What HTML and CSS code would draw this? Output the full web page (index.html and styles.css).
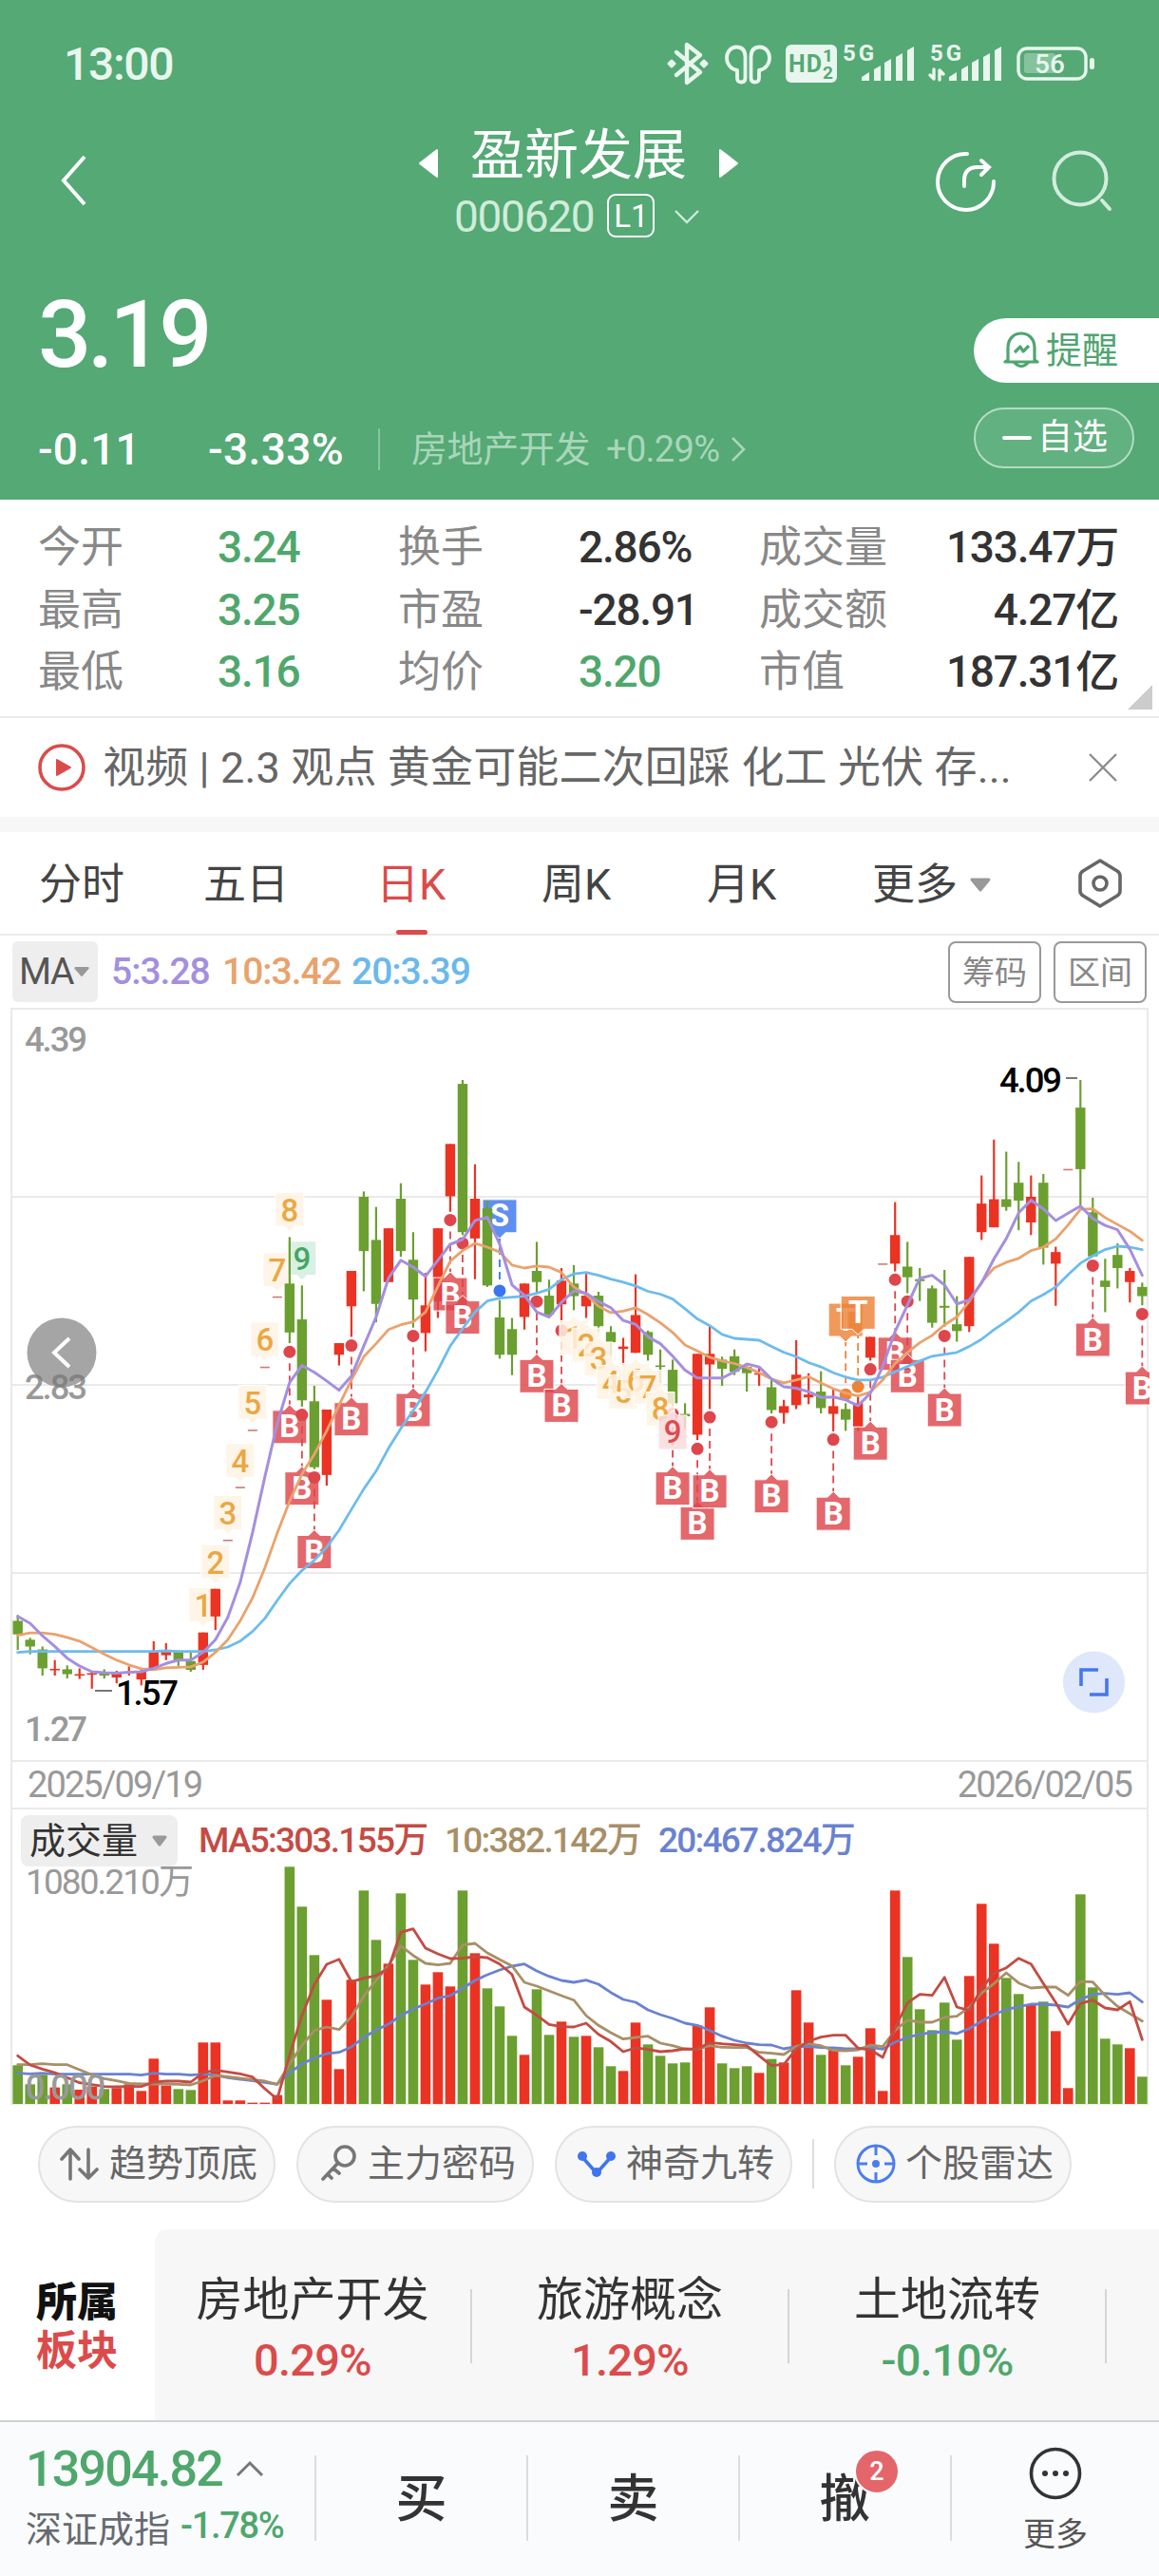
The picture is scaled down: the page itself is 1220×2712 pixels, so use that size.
FILE: index.html
```
<!DOCTYPE html>
<html lang="zh-CN">
<head>
<meta charset="utf-8">
<title>盈新发展 000620</title>
<link rel="stylesheet" href="styles.css">
</head>
<body>
<header class="head">
  <div class="status">
    <span class="clock">13:00</span>
    <svg class="status-icons" width="470" height="80" viewBox="0 0 470 80" fill="none" stroke="#e9f6ee" stroke-linejoin="round" stroke-linecap="round">
      <path d="M22 25L47 46L33 57V17L47 28L22 49" stroke-width="4.400"/>
      <path d="M14 37l3-3 3 3-3 3zM48 37l3-3 3 3-3 3z" fill="#e9f6ee" stroke-width="3"/>
      <path id="bud" d="M86 44C79 43 75 37 75 31C75 24 80 19.500 85 19.500C91 19.500 94.500 23 94.500 30V52Q94.500 56.500 90.500 56.500Q86 56.500 86 52z" stroke-width="3.800"/>
      <path d="M109 44C116 43 120 37 120 31C120 24 115 19.500 110 19.500C104 19.500 100.500 23 100.500 30V52Q100.500 56.500 104.500 56.500Q109 56.500 109 52z" stroke-width="3.800"/>
      <rect x="137" y="17" width="54" height="40" rx="6" fill="#e9f6ee" stroke="none"/>
      <g fill="#54a975" stroke="none" font-weight="700"><text x="140" y="46" font-size="25" textLength="35">HD</text><text x="176" y="35" font-size="19">1</text><text x="176" y="53" font-size="19">2</text></g>
      <g fill="#e9f6ee" stroke="none" font-weight="700" font-size="24"><text x="197" y="34" textLength="33">5G</text><text x="289" y="34" textLength="33">5G</text></g>
      <g fill="#e9f6ee" stroke="none">
        <path d="M217 55v-4l8-5v9zM230 55V43l7-4v16zM241 55V36l7-4v23zM253 55V30l7-4v29zM265 55V23l7-4v36z"/>
        <path d="M309 55v-4l8-5v9zM322 55V43l7-4v16zM333 55V36l7-4v23zM345 55V30l7-4v29zM357 55V23l7-4v36z"/>
      </g>
      <path d="M293 43V53L289 49M299 54V44L303 48" stroke-width="3.400"/>
      <rect x="388" y="26" width="33" height="21" rx="3" fill="#86c39d" stroke="none"/>
      <rect x="382" y="21" width="71" height="32" rx="9" stroke-width="3.400"/>
      <rect x="457" y="31" width="5" height="12" rx="2.500" fill="#e9f6ee" stroke="none"/>
      <text x="399" y="47" fill="#e9f6ee" stroke="none" font-size="28" font-weight="500">56</text>
    </svg>
  </div>
  <div class="title-row">
    <svg class="back" width="30" height="56" viewBox="0 0 30 56"><path d="M27 3L5 28L27 53" fill="none" stroke="#fff" stroke-width="4"/></svg>
    <div class="title">
      <div class="name">
        <svg width="22" height="32" viewBox="0 0 22 32"><path d="M20 2V30L2 16z" fill="#fff" stroke="#fff" stroke-width="2" stroke-linejoin="round"/></svg>
        <span>盈新发展</span>
        <svg width="22" height="32" viewBox="0 0 22 32"><path d="M2 2V30L20 16z" fill="#fff" stroke="#fff" stroke-width="2" stroke-linejoin="round"/></svg>
      </div>
      <div class="code"><span>000620</span><b>L1</b>
        <svg width="26" height="16" viewBox="0 0 26 16"><path d="M1 2L13 14L25 2" fill="none" stroke="#cfeada" stroke-width="2.400"/></svg>
      </div>
    </div>
    <svg class="tools" width="190" height="70" viewBox="0 0 190 70" fill="none" stroke-linecap="round" stroke="#fff" stroke-width="4">
      <path d="M34 5A29.500 29.500 0 1 0 62 34M31 39V33Q31 19 45 19H57M49 12L57 19L49 27"/>
      <g stroke="#d3eddd"><circle cx="153" cy="31" r="27.500"/><path d="M176 54L184 63"/></g>
    </svg>
  </div>
  <div class="quote">
    <div class="price">3.19</div>
    <div class="change"><span class="diff">-0.11</span><span class="pct">-3.33%</span><i></i><span class="sector">房地产开发</span><span class="sector-pct">+0.29%</span>
      <svg width="17" height="28" viewBox="0 0 17 28"><path d="M2 2L14 14L2 26" fill="none" stroke="#a9d6b9" stroke-width="2.600"/></svg>
    </div>
  </div>
  <div class="actions">
    <div class="alert">
      <svg width="38" height="40" viewBox="0 0 38 40" fill="none" stroke="#4fa56f" stroke-width="3.200" stroke-linejoin="round"><path d="M5 30V17C5 -3 33 -3 33 17V30L36 32H2zM11 32q8 9 16 0"/><path d="M12 22l6-6 3 5 6-6"/></svg>
      <span>提醒</span>
    </div>
    <div class="watch"><i></i><span>自选</span></div>
  </div>
</header>

<section class="stats">
  <span>今开</span><b class="down">3.24</b><span>换手</span><b>2.86%</b><span>成交量</span><b class="end">133.47万</b>
  <span>最高</span><b class="down">3.25</b><span>市盈</span><b>-28.91</b><span>成交额</span><b class="end">4.27亿</b>
  <span>最低</span><b class="down">3.16</b><span>均价</span><b class="down">3.20</b><span>市值</span><b class="end">187.31亿</b>
  <i class="corner"></i>
</section>

<section class="news">
  <svg width="52" height="52" viewBox="0 0 52 52"><circle cx="26" cy="26" r="23" fill="none" stroke="#db4b4b" stroke-width="3.600"/><path d="M21 18V34L35 26z" fill="#db4b4b" stroke="#db4b4b" stroke-width="2" stroke-linejoin="round"/></svg>
  <p>视频 | 2.3 观点 黄金可能二次回踩 化工 光伏 存...</p>
  <svg width="30" height="30" viewBox="0 0 30 30"><path d="M1 1L29 29M29 1L1 29" stroke="#8c8c8c" stroke-width="2.400"/></svg>
</section>

<nav class="tabs">
  <span>分时</span><span>五日</span><span class="on">日K</span><span>周K</span><span>月K</span>
  <span class="more">更多<svg width="24" height="16" viewBox="0 0 24 16"><path d="M3 2H21L12 13z" fill="#999" stroke="#999" stroke-width="3" stroke-linejoin="round"/></svg></span>
  <svg class="gear" width="50" height="54" viewBox="0 0 50 54" fill="none" stroke="#666" stroke-width="3.600"><path d="M25 3L43 14Q46 16 46 19V35Q46 38 43 40L25 51L7 40Q4 38 4 35V19Q4 16 7 14z" stroke-linejoin="round"/><circle cx="25" cy="27" r="7"/></svg>
</nav>

<section class="ma-row">
  <div class="ma-pick">MA<svg width="18" height="12" viewBox="0 0 16 11"><path d="M2 2H14L8 9z" fill="#999" stroke="#999" stroke-width="2" stroke-linejoin="round"/></svg></div>
  <b class="ma5">5:3.28</b><b class="ma10">10:3.42</b><b class="ma20">20:3.39</b>
  <div class="box first">筹码</div><div class="box">区间</div>
</section>

<section class="kline">
  <svg id="kline" width="1220" height="794" viewBox="0 0 1220 794"></svg>
</section>
<div class="dates"><span>2025/09/19</span><span>2026/02/05</span></div>
<section class="volume">
  <div class="vol-head">
    <div class="vol-pick">成交量<svg width="18" height="13" viewBox="0 0 18 13"><path d="M3 2H15L9 10z" fill="#999" stroke="#999" stroke-width="3" stroke-linejoin="round"/></svg></div>
    <b class="v5">MA5:303.155万</b><b class="v10">10:382.142万</b><b class="v20">20:467.824万</b>
  </div>
  <svg id="volume" class="vol-plot" width="1220" height="311" viewBox="0 0 1220 311"></svg>
</section>

<section class="chips">
  <div class="chip"><svg width="42" height="42" viewBox="0 0 42 42" fill="none" stroke="#777" stroke-width="3.600" stroke-linecap="round" stroke-linejoin="round"><path d="M11 37V6M2 16L11 6L20 16M30 6V36M21 27L30 36L39 27"/></svg><span>趋势顶底</span></div>
  <div class="chip"><svg width="42" height="42" viewBox="0 0 42 42" fill="none" stroke="#777" stroke-width="3.600" stroke-linecap="round"><circle cx="28" cy="13" r="10"/><path d="M21 20L5 37M16 26L22 31M10 32L14 36"/></svg><span>主力密码</span></div>
  <div class="chip"><svg width="42" height="42" viewBox="0 0 42 42" fill="#3f74f0"><path d="M6 14L21 31L36 14" fill="none" stroke="#3f74f0" stroke-width="3.600"/><circle cx="6" cy="13" r="5"/><circle cx="36" cy="13" r="5"/><circle cx="21" cy="30" r="5"/></svg><span>神奇九转</span></div>
  <i></i>
  <div class="chip"><svg width="42" height="42" viewBox="0 0 42 42" fill="none" stroke="#4a7df0" stroke-width="3"><circle cx="21" cy="21" r="19"/><path d="M21 2V12M21 30V40M2 21H12M30 21H40"/><circle cx="21" cy="21" r="2.500" fill="#4a7df0"/></svg><span>个股雷达</span></div>
</section>

<section class="sectors">
  <div class="sector-title"><span>所属</span><span class="up">板块</span></div>
  <div class="sector-list">
    <div class="item"><span>房地产开发</span><b class="up">0.29%</b></div>
    <div class="item"><span>旅游概念</span><b class="up">1.29%</b></div>
    <div class="item"><span>土地流转</span><b class="down">-0.10%</b></div>
  </div>
</section>

<footer class="bar">
  <div class="index">
    <div class="index-value">13904.82<svg width="30" height="18" viewBox="0 0 30 18"><path d="M2 16L15 3L28 16" fill="none" stroke="#777" stroke-width="3"/></svg></div>
    <div class="index-name">深证成指<b>-1.78%</b></div>
  </div>
  <div class="act">买</div>
  <div class="act">卖</div>
  <div class="act">撤<em>2</em></div>
  <div class="act-more">
    <svg width="58" height="58" viewBox="0 0 58 58"><circle cx="29" cy="29" r="25.500" fill="none" stroke="#333" stroke-width="3.600"/><g fill="#333"><circle cx="18" cy="29" r="3"/><circle cx="29" cy="29" r="3"/><circle cx="40" cy="29" r="3"/></g></svg>
    <span>更多</span>
  </div>
</footer>
<script src="chart.js"></script>
</body>
</html>
```
FILE: styles.css
```
* { box-sizing: border-box; }
body { margin: 0; width: 1220px; background: #fff; color: #333; font-family: Roboto, "Noto Sans CJK SC", sans-serif; }
svg { display: block; flex: none; }
b { font-weight: 500; }
.down { color: #4fa76c; }
.up { color: #db4b4b; }

.head { position: relative; height: 526px; background: #54a975; color: #fff; overflow: hidden; }
.status { display: flex; justify-content: space-between; align-items: center; height: 132px; padding: 0 60px 0 67px; }
.clock { font-size: 48px; font-weight: 500; letter-spacing: -1.3px; color: #e9f6ee; padding-top: 2px; }
.status-icons { margin-top: 8px; }
.title-row { display: flex; height: 128px; padding-left: 62px; }
.back { margin-top: 30px; }
.title { display: flex; flex-direction: column; width: 340px; margin-left: 348px; }
.name { display: flex; justify-content: space-between; align-items: center; height: 62px; width: 338px; font-size: 57px; line-height: 62px; }
.name svg { margin-top: 17px; }
.name span { position: relative; top: 1px; }
.code { display: flex; align-items: center; height: 48px; margin: 10px 0 0 38px; font-size: 46px; line-height: 48px; letter-spacing: -1.3px; color: #d0ecda; }
.code b { width: 50px; height: 46px; margin: -3px 21px 0 14px; border: 2px solid #fff; border-radius: 9px; color: #fff; font-size: 33px; font-weight: 400; line-height: 43px; text-align: center; letter-spacing: 0; }
.tools { margin: 25px 0 0 204px; }
.quote { padding-left: 40px; }
.price { margin-top: 36px; font-size: 99px; line-height: 112px; font-weight: 500; letter-spacing: -4.3px; }
.change { display: flex; align-items: center; height: 50px; margin-top: 40px; }
.diff, .pct { font-size: 46px; font-weight: 500; }
.diff { width: 179px; letter-spacing: .2px; }
.pct { width: 179px; letter-spacing: .4px; }
.change i { width: 2px; height: 44px; background: #88c49c; margin-right: 33px; }
.sector, .sector-pct { color: #a9d6b9; font-size: 38px; line-height: 44px; }
.sector { letter-spacing: -.4px; }
.sector-pct { margin: 0 12px 0 17px; letter-spacing: -.7px; }
.actions { position: absolute; right: 0; top: 335px; width: 195px; }
.alert { display: flex; align-items: center; height: 68px; padding-left: 31px; border-radius: 34px 0 0 34px; background: #fff; color: #4fa56f; font-size: 38px; line-height: 44px; }
.alert span { margin-left: 7px; position: relative; top: 0; }
.watch { display: flex; align-items: center; width: 169px; height: 64px; margin-top: 26px; padding-left: 28px; border: 2px solid #b4dcc3; border-radius: 32px; background: #62b181; font-size: 37px; line-height: 44px; }
.watch i { width: 31px; height: 4px; border-radius: 2px; background: #fff; margin-right: 6px; }

.stats { position: relative; display: grid; grid-template-columns: 189px 190px 190px 190px 140px 238px; grid-auto-rows: 65.500px; height: 230px; padding: 18px 41px 0 40px; border-bottom: 2px solid #eaeaea; line-height: 65px; font-size: 45px; color: #888; }
.stats b { color: #333; font-size: 46px; font-weight: 500; letter-spacing: -1.2px; }
.stats b.down { color: #4fa76c; }
.stats b.end { text-align: right; }
.corner { position: absolute; right: 7px; bottom: 7px; width: 26px; height: 26px; background: #ccc; clip-path: polygon(100% 0, 100% 100%, 0 100%); }

.news { display: flex; align-items: center; height: 104px; padding: 0 44px 0 39px; color: #666; }
.news p { flex: 1; margin: 2px 0 0 17px; font-size: 45px; line-height: 60px; white-space: nowrap; letter-spacing: .15px; }

.tabs { position: relative; display: grid; grid-template-columns: 173px 182px 174px 174px 174px 210px 60px; align-items: center; height: 125px; padding: 4px 0 0 41px; border-top: 16px solid #f7f7f7; border-bottom: 2px solid #eaeaea; font-size: 45px; color: #444; line-height: 60px; }
.tabs .on { color: #db4b4b; position: relative; }
.tabs .on::after { content: ""; position: absolute; left: 21px; top: 77px; width: 33px; height: 5px; border-radius: 3px; background: #db4b4b; }
.more { display: flex; align-items: center; gap: 12px; }
.gear { margin: -4px 0 0 5px; }

.ma-row { display: flex; align-items: center; height: 76px; padding: 0 13px; font-size: 39px; }
.ma-row b { font-size: 39px; letter-spacing: -1px; font-weight: 500; }
.ma-row .ma-pick { display: flex; align-items: center; width: 90px; height: 64px; padding-left: 7px; border-radius: 6px; background: #eee; color: #555; letter-spacing: -1.5px; margin-right: 14px; }
.ma5 { width: 117px; color: #a48fdf; }
.ma10 { width: 136px; color: #e9a26c; }
.ma20 { color: #6ab9ec; }
.box { width: 98px; height: 65px; border: 2px solid #999; border-radius: 8px; color: #888; font-size: 34px; line-height: 62px; text-align: center; }
.box.first { margin: 0 13px 0 auto; }

.kline { height: 793px; }
.dates { display: flex; justify-content: space-between; height: 51px; margin: 0 11px; padding: 0 16px; border: 2px solid #eaeaea; border-top: 0; color: #999; font-size: 38px; line-height: 51px; letter-spacing: -1.900px; }
.volume { position: relative; height: 311px; }
.vol-plot { position: absolute; left: 0; top: 0; }
.vol-head { position: relative; z-index: 1; display: flex; align-items: center; height: 66px; padding-left: 22px; font-size: 37px; }
.vol-pick { display: flex; align-items: center; gap: 14px; width: 165px; height: 54px; padding-left: 9px; border-radius: 8px; background: #eee; color: #333; font-size: 38px; line-height: 50px; margin-right: 22px; }
.vol-head b { font-size: 37px; letter-spacing: -1.750px; line-height: 52px; }
.v5 { width: 259px; color: #c44b43; }
.v10 { width: 225px; color: #a88f66; }
.v20 { color: #6a82d0; }

.chips { display: flex; align-items: center; gap: 22px; height: 131px; padding: 0 0 7px 40px; }
.chip { display: flex; align-items: center; width: 250px; height: 81px; padding-left: 21px; border: 2px solid #e3e3e3; border-radius: 41px; background: #f7f7f7; color: #666; font-size: 39px; line-height: 50px; }
.chip span { margin-left: 10px; white-space: nowrap; }
.chips i { width: 2px; height: 52px; background: #ddd; margin: 0 -1px; }

.sectors { display: flex; height: 201px; }
.sector-title { display: flex; flex-direction: column; width: 163px; padding: 52px 0 0 38px; font-size: 43px; line-height: 51px; font-weight: 900; color: #111; }
.sector-title .up { color: #db4b4b; font-weight: 700; }
.sector-list { display: flex; flex: 1; background: #f7f7f7; border-radius: 14px 0 0 0; overflow: hidden; }
.item { display: flex; flex: 0 0 334px; flex-direction: column; align-items: center; height: 78px; margin-top: 63px; border-right: 2px solid #d5d5d5; font-size: 49px; line-height: 64px; }
.item span { margin-top: -20px; }
.item b { font-size: 47px; line-height: 60px; letter-spacing: -.8px; margin-top: 1px; }

.bar { display: flex; height: 164px; padding-top: 35px; border-top: 2px solid #d2d2d2; background: #fafbfd; }
.index { width: 333px; height: 90px; border-right: 2px solid #ddd; padding-left: 27px; }
.index-value { display: flex; align-items: center; gap: 14px; height: 40px; margin-top: -6px; color: #4fa76c; font-size: 52px; font-weight: 500; letter-spacing: -1.800px; }
.index-name { display: flex; align-items: center; height: 44px; margin-top: 18px; font-size: 38px; color: #666a70; white-space: nowrap; }
.index-name b { margin-left: 11px; color: #4fa76c; font-size: 38px; letter-spacing: -1.3px; }
.act { position: relative; flex: 0 0 223px; height: 90px; border-right: 2px solid #ddd; text-align: center; font-size: 54px; line-height: 94px; color: #333; font-weight: 500; }
.act em { position: absolute; left: 120px; top: -7px; width: 48px; height: 48px; border: 2px solid #fff; border-radius: 50%; background: #e5666a; color: #fff; font: 500 27px/44px Roboto, sans-serif; }
.act-more { display: flex; flex: 1; flex-direction: column; align-items: center; margin-top: -10px; color: #555; font-size: 34px; line-height: 50px; }
.act-more span { margin-top: 10px; }
```
FILE: chart.js
```
const NS = 'http://www.w3.org/2000/svg';
const RED = '#ea3323', GREEN = '#6b9f30';
const x = i => 18.7 + i * 13.007;
const y = v => (v - 22) / 1.96;

function add(parent, tag, attrs, text) {
  const el = document.createElementNS(NS, tag);
  for (const k in attrs) el.setAttribute(k, attrs[k]);
  if (text !== undefined) el.textContent = text;
  parent.appendChild(el);
  return el;
}
const line = (svg, values, scale, color, width) => add(svg, 'polyline', {
  points: values.map((v, i) => x(i).toFixed(1) + ',' + scale(v).toFixed(1)).join(' '),
  fill: 'none', stroke: color, 'stroke-width': width, 'stroke-linejoin': 'round', 'stroke-linecap': 'round'
});

// side, high, body top, body bottom, low; '-' marks a one-price session
const candles = `G 1275 1287 1315 1347|G 1322 1326 1340 1356|G 1340 1346 1385 1400|R 1368 1386 1389 1400|G 1379 1387 1397 1406|R 1385 1397 1400 1407|R 1390 1395 1398 1427|G 1387 1396 1400 1406|R 1390 1394 1404 1416|R 1381 1392 1395 1400|R 1388 1392 1408 1420|R 1329 1350 1385 1388|R 1333 1350 1358 1368|G 1348 1350 1370 1380|G 1352 1370 1388 1392|R 1311 1311 1378 1388|R 1221 1221 1278 1306|- 1121|- 1012|- 894|- 764|- 619|G 495 591 692 714|G 595 665 832 845|G 802 834 970 974|R 851 851 986 1008|R 714 714 738 760|R 565 565 638 701|G 401 412 524 607|G 433 501 633 671|R 477 477 588 588|G 384 416 524 536|G 485 542 624 682|R 569 636 693 731|R 477 477 628 662|R 303 303 411 443|G 171 179 485 491|R 345 416 498 582|G 420 436 595 598|G 625 661 738 746|G 662 685 738 780|R 591 591 660 686|G 505 565 588 610|G 583 616 655 658|R 559 585 634 672|G 553 591 617 646|R 571 616 638 662|G 608 616 679 691|G 679 691 712 741|R 703 721 726 760|R 572 656 734 734|G 688 691 738 750|G 727 760 763 796|G 748 769 838 845|G 838 860 865 890|R 736 736 903 914|R 680 736 758 850|G 742 748 767 802|G 727 741 773 780|G 760 763 776 814|R 765 776 779 802|G 790 805 852 859|R 831 844 858 880|R 708 779 842 850|R 776 820 826 840|G 772 814 848 859|R 810 844 860 896|G 838 850 872 895|R 825 838 887 895|R 701 701 744 750|- 551|R 423 491 550 566|G 505 556 578 611|G 559 582 586 627|G 595 601 672 682|G 563 637 641 680|G 617 675 689 711|R 536 536 679 691|R 368 426 485 501|R 294 417 475 475|G 319 417 433 441|G 340 383 420 481|R 368 412 465 491|G 365 383 517 552|R 515 526 550 637|- 356|G 171 228 355 432|G 414 444 535 535|G 540 585 598 650|G 508 532 559 601|R 559 565 588 630|G 589 598 617 636`
  .split('|').map(s => s.split(' '));
const ma5 = [1278,1292,1318,1340,1364,1380,1392,1394,1395,1393,1392,1385,1375,1368,1368,1352,1326,1280,1208,1105,990,880,795,760,774,792,811,782,720,660,580,543,557,576,543,510,500,461,454,510,594,615,650,660,630,606,611,628,641,667,675,701,715,741,770,786,786,786,773,757,763,788,804,807,814,826,825,831,843,817,762,690,635,580,574,594,633,625,590,540,498,445,419,437,461,446,431,457,471,480,520,574];
const ma10 = [1317,1312,1312,1315,1321,1329,1342,1356,1368,1378,1386,1388,1384,1383,1382,1372,1352,1326,1287,1240,1178,1106,1040,984,943,895,842,790,742,715,686,676,670,650,597,545,523,508,516,526,553,559,555,557,568,598,614,638,651,648,641,655,672,692,718,730,743,751,756,764,775,788,796,790,783,796,808,817,823,815,790,756,733,713,698,676,660,628,588,559,547,539,523,516,499,470,438,437,455,469,483,502];
const ma20 = [1352,1350,1350,1350,1350,1350,1350,1350,1350,1350,1350,1350,1349,1350,1350,1350,1347,1341,1329,1309,1282,1245,1210,1183,1162,1135,1100,1057,1015,978,931,890,853,815,770,720,684,650,627,621,619,617,611,603,583,571,568,574,582,588,596,607,613,623,643,664,678,696,704,706,708,721,733,742,754,763,775,784,790,790,784,773,762,751,741,737,733,721,706,686,669,650,627,614,598,573,549,534,521,514,516,521];

const k = document.getElementById('kline');
add(k, 'path', { d: 'M12 794V1H1208V794M12 793H1208M12 199H1208M12 397H1208M12 595H1208', fill: 'none', stroke: '#eaeaea', 'stroke-width': 2 });
const label = (svg, px, py, text, color, len) => add(svg, 'text', { x: px, y: py, fill: color, 'font-size': 36.5, 'font-weight': 500, textLength: len }, text);

// trade flag: box with a small pointer, dashed leader and a dot at the price
function flag(i, dot, tip, letter) {
  const up = letter === 'B';
  const color = { B: '#de464c', S: '#3b76ef', T: '#eb8438' }[letter];
  const cx = x(i), t = y(tip), d = y(dot), s = up ? 1 : -1;
  add(k, 'path', { d: `M${cx} ${d + s * 12}V${t}`, stroke: color, 'stroke-width': 1.8, 'stroke-dasharray': '8 5' });
  add(k, 'circle', { cx, cy: d, r: 6.5, fill: color });
  add(k, 'path', { d: `M${cx} ${t}l6 ${s * 6}h12v${s * 35}h-36v${s * -35}h12z`, fill: color, 'fill-opacity': .82, stroke: '#fff', 'stroke-width': 1 });
  add(k, 'text', { x: cx, y: t + s * 23.500 + 11, 'text-anchor': 'middle', 'font-size': 33, 'font-weight': 700, fill: '#fff' }, letter);
}
// nine-turn counter tag, tip is the pointer end
function turn(i, digit, tip, down) {
  const nine = digit === 9, cx = x(i), t = y(tip), s = down ? -1 : 1;
  const bg = nine ? (down ? '#d3eddd' : '#fadadd') : '#fef3e4';
  const fg = nine ? (down ? '#45a567' : '#dd4b50') : '#eba743';
  add(k, 'path', { d: `M${cx} ${t}l5 ${s * 5}h10v${s * 36}h-30v${s * -36}h10z`, fill: bg, 'fill-opacity': .85, stroke: '#fff', 'stroke-width': 1 });
  add(k, 'text', { x: cx, y: t + s * 22.500 + 12, 'text-anchor': 'middle', 'font-size': 33, 'font-weight': 500, fill: fg }, digit);
}

[1219,1130,1029,921,801,671,527,403].forEach((v, n) => turn(15 + n, n + 1, v + 80, true));
turn(23, 9, 584, true);
flag(39, 606, 498, 'S');
candles.forEach(([side, hi, top, bot, low], i) => {
  const cx = x(i);
  if (side === '-') return add(k, 'path', { d: `M${cx - 5} ${y(hi)}h10`, stroke: '#cf7a72', 'stroke-width': 1.6 });
  const fill = side === 'R' ? RED : GREEN;
  add(k, 'path', { d: `M${cx} ${y(hi)}V${y(low)}`, stroke: fill, 'stroke-width': 2.2 });
  add(k, 'rect', { x: cx - 5.200, y: y(top), width: 10.400, height: Math.max(1.6, (bot - top) / 1.96), fill });
});
[[22,732,841],[23,862,968],[24,991,1099],[27,719,825],[32,699,806],[35,460,567],[36,508,615],[42,628,736],[44,688,797],[53,860,968],[55,932,1040],[56,867,974],[61,877,984],[66,913,1020],[69,768,875],[71,583,690],[72,628,736],[75,699,806],[87,554,661],[91,654,761]]
  .forEach(([i, dot, tip]) => flag(i, dot, tip, 'B'));
flag(67, 820, 712, 'T');
flag(68, 804, 697, 'T');
[658,673,702,750,770,746,760,805,853].forEach((v, n) => turn(45 + n, n + 1, v, false));
line(k, ma20, y, '#6cbcee', 2.8);
line(k, ma10, y, '#eaa26c', 2.8);
line(k, ma5, y, '#a48fdf', 3);
add(k, 'rect', { x: 1210, y: 300, width: 10, height: 200, fill: '#fff' });

label(k, 26, 46, '4.39', '#999', 66);
label(k, 26, 772, '1.27', '#999', 66);
label(k, 122, 734, '1.57', '#000', 66);
label(k, 1052, 89, '4.09', '#000', 66);
add(k, 'path', { d: 'M100 719h18M1122 74h12', stroke: '#777', 'stroke-width': 2 });
add(k, 'circle', { cx: 65, cy: 363, r: 36.5, fill: '#a5a5a5' });
add(k, 'path', { d: 'M73 348L57 363L73 378', fill: 'none', stroke: '#fff', 'stroke-width': 4 });
label(k, 26, 412, '2.83', '#777', 66).setAttribute('fill-opacity', .75);
add(k, 'circle', { cx: 1151.5, cy: 710, r: 32.500, fill: '#dfe7fb' });
add(k, 'path', { d: 'M1138 714V697H1156M1147 723H1165V706', fill: 'none', stroke: '#4478ec', 'stroke-width': 3.6 });

// volume bars, tops measured down from the panel head
const volumes = 'G1003 G1063 G1033 R1073 G1063 R1080 R1070 G1078 R1075 R1063 R1084 R982 R1067 G1078 G1081 R931 R931 R1114 R1114 R1121 R1121 R1097 G376 G502 G655 R796 R1015 R733 G451 G607 R682 G460 G670 R748 R709 R754 G451 R649 G760 G817 G910 R970 G763 G907 R865 G913 R910 G946 G1006 R1021 R868 G937 G973 G997 G994 R877 R820 G997 G1012 G1006 R1027 G983 R994 R766 R868 G970 R955 G1003 R976 R886 R1084 R451 G661 G826 G892 G805 G922 R721 R493 R619 G727 G778 R813 G802 R895 R1075 G463 G757 G919 G937 R949 G1039'.split(' ');
const v5 = [973,1002,1015,1026,1042,1058,1064,1070,1071,1070,1070,1056,1053,1053,1056,1027,1018,1024,1030,1040,1077,1110,970,845,748,684,668,739,728,720,697,583,572,633,651,666,665,660,663,683,716,819,845,874,881,882,870,905,928,960,948,953,960,957,951,952,931,935,938,941,973,1004,1000,952,927,914,908,908,949,954,978,885,806,779,782,725,819,830,760,712,695,665,683,745,805,873,808,797,822,828,802,922];
const v10 = [1001,1001,998,1001,1001,1017,1033,1045,1052,1060,1062,1062,1062,1063,1065,1052,1035,1039,1044,1048,1053,1063,1000,940,893,882,890,850,785,735,688,626,656,681,686,681,623,618,648,669,689,741,753,768,783,797,846,877,900,920,915,911,933,941,952,952,941,946,947,947,962,965,969,943,935,941,956,957,954,939,944,893,860,867,867,852,848,820,775,745,711,743,759,756,756,782,738,740,782,817,840,863];
const v20 = [1028,1030,1028,1031,1031,1031,1031,1031,1031,1031,1034,1028,1031,1031,1034,1031,1034,1042,1047,1052,1057,1063,1027,998,980,966,962,945,915,892,873,846,825,809,791,783,760,735,717,702,690,683,705,722,735,741,734,747,773,795,804,828,843,855,870,877,893,911,924,933,938,939,951,944,944,947,948,951,950,946,952,930,915,905,900,897,903,887,863,842,827,818,810,810,813,819,795,779,776,779,774,803];
const vy = v => v / 3 - 65;
const vol = document.getElementById('volume');
add(vol, 'path', { d: 'M12 0V311M1208 0V311M11 310.5H1209', stroke: '#eaeaea', 'stroke-width': 2 });
volumes.forEach((s, i) => {
  const top = vy(+s.slice(1));
  add(vol, 'rect', { x: x(i) - 5.300, y: top, width: 10.600, height: 310 - top, fill: s[0] === 'R' ? RED : GREEN });
});
line(vol, v20, vy, '#6a82d0', 2.8);
line(vol, v10, vy, '#a88f66', 2.8);
line(vol, v5, vy, '#c44b43', 2.8);
add(vol, 'text', { x: 27, y: 89, fill: '#999', 'font-size': 37, textLength: 177 }, '1080.210万');
add(vol, 'text', { x: 27, y: 305, fill: '#999', stroke: '#999', 'stroke-width': .8, 'font-size': 36, textLength: 84 }, '0.000');
```
